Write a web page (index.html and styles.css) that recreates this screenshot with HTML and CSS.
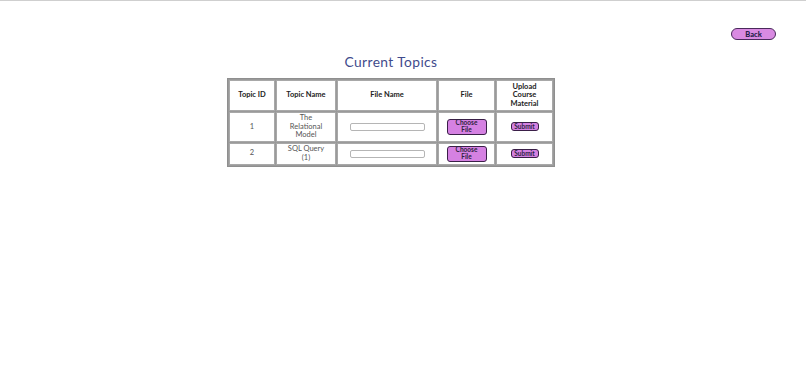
FILE: index.html
```html
<!DOCTYPE html>
<html lang="en">
<head>
<meta charset="UTF-8">
<meta name="viewport" content="width=device-width, initial-scale=1">
<title>Current Topics</title>
<link rel="stylesheet" href="styles.css">
</head>
<body>

<div class="page">
  <div class="topbar">
    <button class="back">Back</button>
  </div>

  <div class="content">
    <h2 class="title">Current Topics</h2>

    <table class="topics">
      <tr>
        <th class="c-id">Topic ID</th>
        <th class="c-name">Topic Name</th>
        <th class="c-file">File Name</th>
        <th class="c-pick">File</th>
        <th class="c-up">Upload Course Material</th>
      </tr>
      <tr class="r1">
        <td>1</td>
        <td class="c-name">The Relational Model</td>
        <td><input type="text" class="fname"></td>
        <td><button class="choose">Choose File</button></td>
        <td><button class="submit">Submit</button></td>
      </tr>
      <tr class="r2">
        <td>2</td>
        <td class="c-name">SQL Query (1)</td>
        <td><input type="text" class="fname"></td>
        <td><button class="choose">Choose File</button></td>
        <td><button class="submit">Submit</button></td>
      </tr>
    </table>
  </div>
</div>

</body>
</html>
```

FILE: styles.css
```css
body{margin:0;font-family:Lato,"Open Sans",Arial,sans-serif;background:#fff;color:#333;}
.page{border-top:1px solid #cfcfcf;min-height:389px;}
.topbar{display:flex;justify-content:flex-end;padding:27px 30px 0 0;}
.back{width:45px;height:12px;padding:0;border:1.5px solid #4a2a5c;border-radius:7px;background:#d98ae2;color:#24214a;font-family:inherit;font-size:7.5px;font-weight:900;line-height:9px;cursor:pointer;}
.content{display:flex;flex-direction:column;align-items:center;padding-right:24px;}
.title{margin:13px 0 8px;font-size:13.8px;font-weight:400;letter-spacing:.4px;color:#3f4b8c;}
.topics{border:1px solid #8f8f8f;border-spacing:1px;background:#9a9a9a;font-size:7.5px;line-height:8.5px;}
.topics th,.topics td{background:#fff;border:1px solid #a8a8a8;text-align:center;vertical-align:middle;padding:1px 3px;}
.topics th{color:#222;font-weight:700;height:27px;}
.topics td{color:#555;}
.c-id{width:38px;}
.topics .c-name{width:42px;padding:1px 8px;}
.c-file{width:92px;}
.c-pick{width:49px;}
.topics .c-up{width:39px;padding:1px 8px;}
.r1 td{height:25px;}
.r2 td{height:18px;}
.fname{width:75px;height:8px;padding:0;border:1px solid #b5b5b5;border-radius:2px;box-sizing:border-box;display:block;margin:0 auto;}
.choose{width:40px;height:16px;padding:0 7px;border:1.5px solid #3a1f48;border-radius:3px;background:#d581e2;color:#2f2340;font-family:inherit;font-size:6.5px;font-weight:700;line-height:6.5px;cursor:pointer;}
.submit{width:28px;height:9px;padding:0;border:1.5px solid #3a1f48;border-radius:3px;background:#d581e2;color:#2a1f40;font-family:inherit;font-size:6.5px;font-weight:700;line-height:6px;cursor:pointer;}
```
